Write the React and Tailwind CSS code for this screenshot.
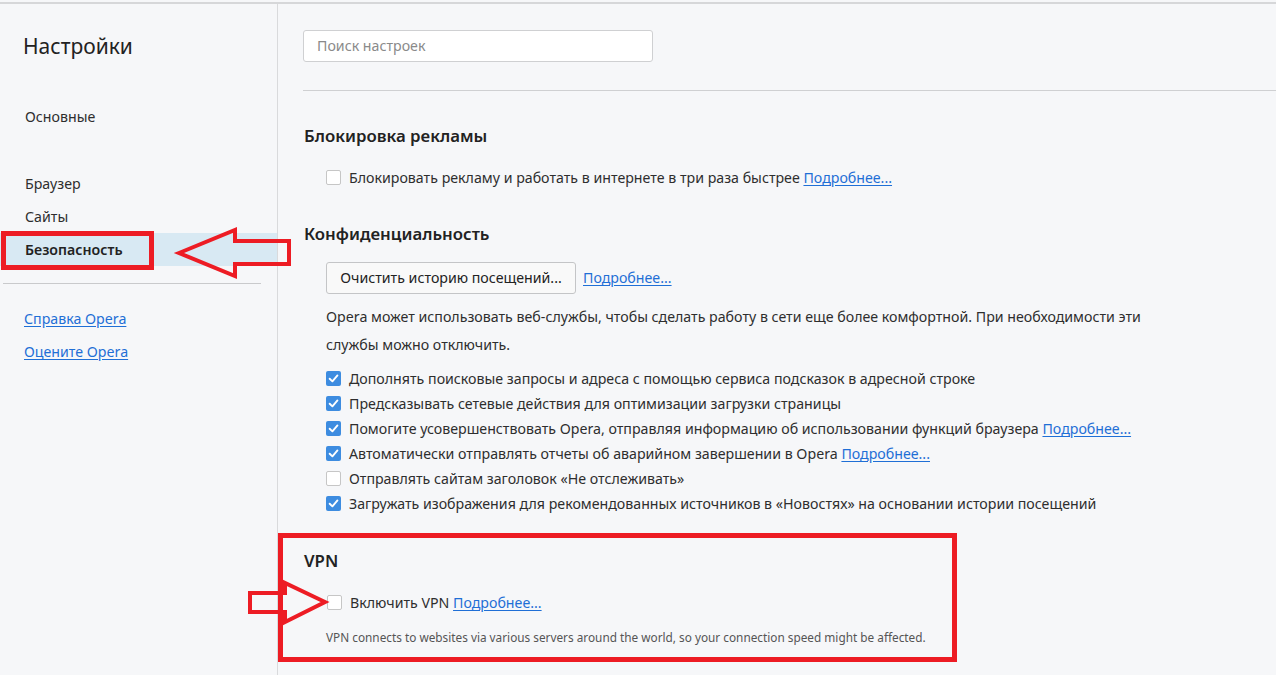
import React from 'react';

const font = { fontFamily: '"Noto Sans", "Open Sans", sans-serif' };

function Check({ checked }) {
    if (!checked) {
        return <span className="w-[15px] h-[15px] shrink-0 rounded-[2px] border border-[#c6c6c6] bg-white" />;
    }
    return (
        <span className="w-[15px] h-[15px] shrink-0 rounded-[2px] bg-[#3d8ce0] flex items-center justify-center">
            <svg width="11" height="11" viewBox="0 0 10 10">
                <polyline points="1.5,5.2 4,7.6 8.6,2.2" fill="none" stroke="white" strokeWidth="1.7" strokeLinecap="round" strokeLinejoin="round" />
            </svg>
        </span>
    );
}

function Link({ children }) {
    return <a className="text-[#1f6fd6] underline underline-offset-2 cursor-pointer">{children}</a>;
}

function Row({ checked, text, more }) {
    return (
        <div className="h-[25px] flex items-center pl-[23px] gap-[8px]">
            <Check checked={checked} />
            <span>
                {text}
                {more && <> <Link>Подробнее...</Link></>}
            </span>
        </div>
    );
}

const privacy = [
    { checked: true, text: 'Дополнять поисковые запросы и адреса с помощью сервиса подсказок в адресной строке' },
    { checked: true, text: 'Предсказывать сетевые действия для оптимизации загрузки страницы' },
    { checked: true, text: 'Помогите усовершенствовать Opera, отправляя информацию об использовании функций браузера', more: true },
    { checked: true, text: 'Автоматически отправлять отчеты об аварийном завершении в Opera', more: true },
    { checked: false, text: 'Отправлять сайтам заголовок «Не отслеживать»' },
    { checked: true, text: 'Загружать изображения для рекомендованных источников в «Новостях» на основании истории посещений' },
];

export default function App() {
    return (
        <div className="relative w-[1276px] h-[675px] overflow-hidden bg-[#f6f7f9] pt-[2px] text-[14.2px] text-[#2e2e2e]" style={font}>
            <div className="flex h-full border-t-2 border-[#d6d7d9]">

                {/* sidebar */}
                <div className="w-[278px] shrink-0 border-r border-[#d9dadc] h-full">
                    <h1 className="mt-[28px] ml-[23px] h-[28px] text-[21px] leading-[28px] text-[#222]">Настройки</h1>
                    <div className="mt-[40px] h-[33px] flex items-center pl-[25px]">Основные</div>
                    <div className="mt-[34px] h-[33px] flex items-center pl-[25px]">Браузер</div>
                    <div className="h-[33px] flex items-center pl-[25px]">Сайты</div>
                    <div className="h-[33px] flex items-center pl-[25px] bg-[#d8e9f3] font-semibold text-[#222]">Безопасность</div>
                    <div className="mt-[17px] ml-[3px] w-[258px] h-px bg-[#c9cacc]" />
                    <div className="mt-[18px] h-[33px] flex items-center pl-[24px]"><Link>Справка Opera</Link></div>
                    <div className="h-[33px] flex items-center pl-[24px]"><Link>Оцените Opera</Link></div>
                </div>

                {/* content */}
                <div className="flex-1 pl-[25px]">
                    <div className="mt-[26px] w-[350px] h-[32px] rounded-[3px] border border-[#cfd0d2] bg-white flex items-center pl-[13px] text-[#8a8a8a]">
                        Поиск настроек
                    </div>
                    <div className="mt-[28px] h-px bg-[#cfd0d2]" />

                    <h2 className="mt-[33px] h-[24px] leading-[24px] text-[16.8px] font-semibold text-[#222] pl-px">Блокировка рекламы</h2>
                    <div className="mt-[17px]">
                        <Row checked={false} text="Блокировать рекламу и работать в интернете в три раза быстрее" more />
                    </div>

                    <h2 className="mt-[32px] h-[24px] leading-[24px] text-[16.8px] font-semibold text-[#222] pl-px">Конфиденциальность</h2>
                    <div className="mt-[16px] flex items-center gap-[7px] pl-[23px]">
                        <button className="w-[250px] h-[32px] rounded-[3px] border border-[#c4c5c7] bg-[#f9f9f9] text-[#222]">
                            Очистить историю посещений...
                        </button>
                        <Link>Подробнее...</Link>
                    </div>
                    <p className="mt-[9px] pl-[23px] leading-[28px]">
                        Opera может использовать веб-службы, чтобы сделать работу в сети еще более комфортной. При необходимости эти<br />
                        службы можно отключить.
                    </p>
                    <div className="mt-[7px]">
                        {privacy.map((p, i) => <Row key={i} {...p} />)}
                    </div>

                    {/* vpn, marked up with the red frame */}
                    <div className="mt-[17px] -ml-[25px] w-[679px] h-[129px] border-[5px] border-[#ed1c24] pl-[21px]">
                        <h2 className="mt-[11px] h-[24px] leading-[24px] text-[16.8px] font-semibold text-[#222]">VPN</h2>
                        <div className="mt-[17px]">
                            <Row checked={false} text="Включить VPN" more />
                        </div>
                        <p className="mt-[14px] pl-[22px] text-[11.8px] leading-[16px] text-[#555]">
                            VPN connects to websites via various servers around the world, so your connection speed might be affected.
                        </p>
                    </div>
                </div>
            </div>

            {/* annotations */}
            <div className="absolute left-[1px] top-[231px] w-[153px] h-[39px] border-[5px] border-[#ed1c24]" />
            <svg className="absolute left-0 top-0 pointer-events-none" width="1276" height="675">
                <polygon points="179,253 235,230 235,241 289,241 289,264 235,264 235,276" fill="none" stroke="#ed1c24" strokeWidth="4" />
                <polygon points="325,602 285,583 285,593 250,593 250,612 285,612 285,622" fill="none" stroke="#ed1c24" strokeWidth="4" />
            </svg>
        </div>
    );
}
